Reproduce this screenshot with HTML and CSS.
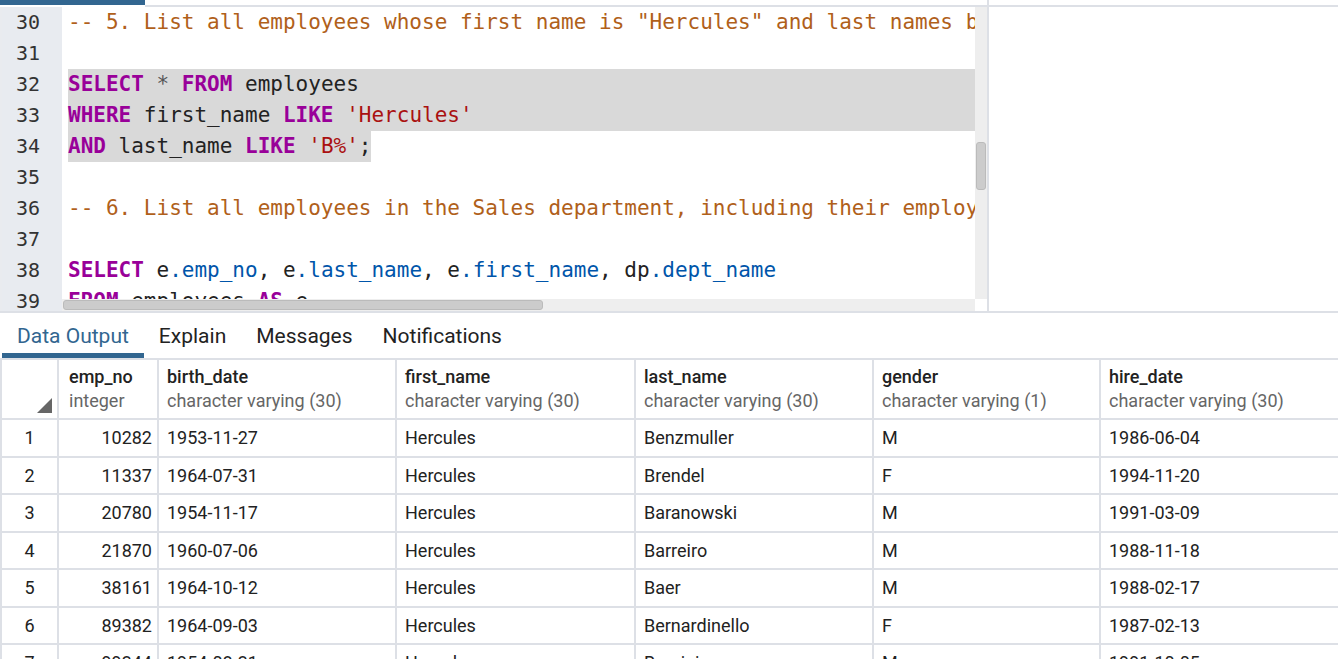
FILE: index.html
```html
<!DOCTYPE html>
<html>
<head>
<meta charset="utf-8">
<link rel="stylesheet" href="styles.css">
</head>
<body>
<div class="top">
  <div class="left-pane">
    <div class="topbar"><div class="tab-ind"></div><div class="topline"></div></div>
    <div class="editor">
      <div class="gutter">
        <div class="ln">30</div><div class="ln">31</div><div class="ln">32</div><div class="ln">33</div><div class="ln">34</div>
        <div class="ln">35</div><div class="ln">36</div><div class="ln">37</div><div class="ln">38</div><div class="ln">39</div>
      </div>
      <div class="code">
        <div class="line"><span class="cm">-- 5. List all employees whose first name is "Hercules" and last names begin with "B."</span></div>
        <div class="line"> </div>
        <div class="line sel"><span class="kw">SELECT</span> <span class="op">*</span> <span class="kw">FROM</span> employees</div>
        <div class="line sel"><span class="kw">WHERE</span> first_name <span class="kw">LIKE</span> <span class="str">'Hercules'</span></div>
        <div class="line"><span class="selpart"><span class="kw">AND</span> last_name <span class="kw">LIKE</span> <span class="str">'B%'</span>;</span></div>
        <div class="line"> </div>
        <div class="line"><span class="cm">-- 6. List all employees in the Sales department, including their employee number, last name, first name, and department name.</span></div>
        <div class="line"> </div>
        <div class="line"><span class="kw">SELECT</span> e<span class="v2">.emp_no</span>, e<span class="v2">.last_name</span>, e<span class="v2">.first_name</span>, dp<span class="v2">.dept_name</span></div>
        <div class="line"><span class="kw">FROM</span> employees <span class="kw">AS</span> e</div>
        <div class="hscroll"><div class="hthumb"></div></div>
      </div>
      <div class="vscroll">
        <div class="vtrack"><div class="vthumb"></div></div>
        <div class="corner"></div>
      </div>
    </div>
  </div>
  <div class="divider"></div>
  <div class="right-pane"><div class="topline"></div></div>
</div>
<div class="hsep"></div>
<div class="bottom">
  <div class="tabs">
    <div class="tab active">Data Output</div>
    <div class="tab">Explain</div>
    <div class="tab">Messages</div>
    <div class="tab">Notifications</div>
  </div>
  <div class="grid-wrap">
    <div class="grid">
      <div class="hc corner-cell"><svg width="15" height="15" viewBox="0 0 15 15"><polygon points="15,0 15,15 0,15" fill="#666"/></svg></div>
      <div class="hc first"><span class="hn">emp_no</span><span class="ht">integer</span></div>
      <div class="hc"><span class="hn">birth_date</span><span class="ht">character varying (30)</span></div>
      <div class="hc"><span class="hn">first_name</span><span class="ht">character varying (30)</span></div>
      <div class="hc"><span class="hn">last_name</span><span class="ht">character varying (30)</span></div>
      <div class="hc"><span class="hn">gender</span><span class="ht">character varying (1)</span></div>
      <div class="hc"><span class="hn">hire_date</span><span class="ht">character varying (30)</span></div>

      <div class="c n">1</div><div class="c r">10282</div><div class="c">1953-11-27</div><div class="c">Hercules</div><div class="c">Benzmuller</div><div class="c">M</div><div class="c">1986-06-04</div>
      <div class="c n">2</div><div class="c r">11337</div><div class="c">1964-07-31</div><div class="c">Hercules</div><div class="c">Brendel</div><div class="c">F</div><div class="c">1994-11-20</div>
      <div class="c n">3</div><div class="c r">20780</div><div class="c">1954-11-17</div><div class="c">Hercules</div><div class="c">Baranowski</div><div class="c">M</div><div class="c">1991-03-09</div>
      <div class="c n">4</div><div class="c r">21870</div><div class="c">1960-07-06</div><div class="c">Hercules</div><div class="c">Barreiro</div><div class="c">M</div><div class="c">1988-11-18</div>
      <div class="c n">5</div><div class="c r">38161</div><div class="c">1964-10-12</div><div class="c">Hercules</div><div class="c">Baer</div><div class="c">M</div><div class="c">1988-02-17</div>
      <div class="c n">6</div><div class="c r">89382</div><div class="c">1964-09-03</div><div class="c">Hercules</div><div class="c">Bernardinello</div><div class="c">F</div><div class="c">1987-02-13</div>
      <div class="c n">7</div><div class="c r">99344</div><div class="c">1954-08-31</div><div class="c">Hercules</div><div class="c">Bernini</div><div class="c">M</div><div class="c">1991-10-05</div>
    </div>
  </div>
</div>
</body>
</html>
```

FILE: styles.css
```css
html, body {
  margin: 0;
  padding: 0;
  background: #fff;
  width: 1338px;
  height: 670px;
  overflow: hidden;
  font-family: Roboto, "Liberation Sans", sans-serif;
}

.top {
  display: flex;
  height: 311px;
}

.left-pane {
  width: 987px;
  display: flex;
  flex-direction: column;
}

.topbar {
  display: flex;
  height: 7px;
}

.tab-ind {
  width: 145px;
  height: 5px;
  background: #326690;
}

.topline {
  flex: 1;
  height: 2px;
  margin-top: 5px;
  background: #dde0e6;
}

.editor {
  display: flex;
  height: 304px;
  border-left: 2px solid #e9ebef;
}

.gutter {
  width: 60px;
  background: #e8ebf0;
  font-family: "DejaVu Sans Mono", "Liberation Mono", monospace;
  font-size: 20px;
  color: #333;
  overflow: hidden;
}

.ln {
  height: 31px;
  line-height: 31px;
  text-align: right;
  padding-right: 22px;
}

.code {
  position: relative;
  flex: 1;
  overflow: hidden;
  font-family: "DejaVu Sans Mono", "Liberation Mono", monospace;
  font-size: 21px;
  color: #222;
  padding-left: 6px;
}

.line {
  height: 31px;
  line-height: 31px;
  white-space: pre;
}

.line.sel {
  background: #d9d9d9;
}

.selpart {
  display: inline-block;
  background: #d9d9d9;
  height: 31px;
}

.kw {
  color: #990099;
  font-weight: bold;
}

.cm {
  color: #b0601a;
}

.str {
  color: #aa1111;
}

.v2 {
  color: #0055aa;
}

.op {
  color: #555;
}

.hscroll {
  position: absolute;
  left: 0;
  right: 0;
  bottom: 0;
  height: 12px;
  background: #eeeeee;
}

.hthumb {
  width: 478px;
  height: 8px;
  margin: 1px;
  background: #cccccc;
  border: 1px solid #bbbbbb;
  border-radius: 3px;
}

.vscroll {
  width: 12px;
  display: flex;
  flex-direction: column;
}

.vtrack {
  flex: 1;
  background: #eeeeee;
  padding-top: 135px;
}

.vthumb {
  height: 46px;
  margin: 0 1px;
  background: #cccccc;
  border: 1px solid #bbbbbb;
  border-radius: 3px;
}

.corner {
  height: 12px;
  background: #fff;
}

.divider {
  width: 2px;
  background: #dde0e6;
}

.right-pane {
  flex: 1;
  display: flex;
  flex-direction: column;
}

.right-pane .topline {
  flex: none;
}

.hsep {
  height: 2px;
  background: #dde0e6;
}

.tabs {
  display: flex;
  height: 45px;
  padding-left: 2px;
}

.tab {
  box-sizing: border-box;
  height: 45px;
  padding: 7px 15px 0;
  line-height: 33px;
  font-size: 21px;
  color: #222;
  border-bottom: 5px solid transparent;
}

.tab.active {
  color: #326690;
  border-bottom-color: #326690;
}

.grid-wrap {
  height: 301px;
  overflow: hidden;
}

.grid {
  display: grid;
  background: #dde0e6;
  padding: 2px 0 0 2px;
  gap: 2px;
  grid-template-columns: 55px 98px 236px 237px 236px 225px 237px;
  grid-template-rows: 58px;
  grid-auto-rows: 35.5px;
  font-size: 18px;
  color: #222;
}

.hc {
  background: #fff;
  display: flex;
  flex-direction: column;
  justify-content: center;
  padding: 0 8px;
  line-height: 24px;
}

.hc.first {
  padding-left: 10px;
}

.hn {
  font-weight: 500;
  color: #222;
}

.ht {
  color: #666;
}

.hc.corner-cell {
  flex-direction: row;
  align-items: flex-end;
  justify-content: flex-end;
  padding: 0 5px 5px 0;
}

.c {
  background: #fff;
  display: flex;
  align-items: center;
  padding: 0 8px;
  white-space: nowrap;
  overflow: hidden;
}

.c.n {
  justify-content: center;
  padding: 0;
}

.c.r {
  justify-content: flex-end;
  padding-right: 5px;
}
```
